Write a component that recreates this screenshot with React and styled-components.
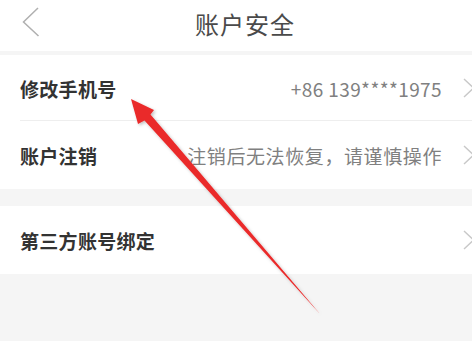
import styled, { createGlobalStyle } from "styled-components";

const GlobalStyle = createGlobalStyle`
  html, body {
    margin: 0;
    padding: 0;
    background: #f5f5f5;
    font-family: "Noto Sans CJK SC", "Noto Sans", sans-serif;
  }
`;

const Page = styled.div`
  position: relative;
  width: 472px;
  height: 341px;
  overflow: hidden;
  background: #f5f5f5;
`;

const Header = styled.header`
  height: 51px;
  background: #fff;
  display: flex;
  align-items: center;
  justify-content: center;
  position: relative;
  margin-bottom: 4px;
  padding-left: 18px;
`;

const BackButton = styled.div`
  position: absolute;
  left: 22px;
  top: 7px;
  width: 18px;
  height: 30px;
  display: flex;
`;

const Title = styled.h1`
  margin: 0;
  font-size: 24px;
  font-weight: 400;
  color: #4a4a4a;
  letter-spacing: 1px;
  line-height: 1;
  margin-top: -4px;
`;

const Group = styled.section`
  background: #fff;
  margin-bottom: ${({ gap }) => gap || 0}px;
`;

const Row = styled.div`
  height: ${({ h }) => h || 67}px;
  display: flex;
  align-items: center;
  padding-left: 20px;
  position: relative;

  ${({ divider }) =>
    divider
      ? `
    &::after {
      content: "";
      position: absolute;
      left: 20px;
      right: 0;
      bottom: 0;
      height: 1px;
      background: #eeeeee;
    }
  `
      : null}
`;

const Label = styled.span`
  font-size: 19px;
  font-weight: 700;
  color: #333;
  flex: 1;
  letter-spacing: 0.3px;
`;

const Value = styled.span`
  font-size: 19px;
  color: #808080;
  margin-right: 21px;
  letter-spacing: ${({ spacing }) => spacing || 0}px;
`;

const Chevron = styled.svg`
  width: 12px;
  height: 20px;
  margin-right: -3px;
  flex-shrink: 0;
`;

const ArrowLayer = styled.svg`
  position: absolute;
  left: 0;
  top: 0;
  pointer-events: none;
`;

const items = [
  { label: "修改手机号", value: "+86 139****1975", h: 66, divider: true, spacing: 0.4 },
  { label: "账户注销", value: "注销后无法恢复，请谨慎操作", h: 68, spacing: 0.6 },
];

const ChevronIcon = () => (
  <Chevron viewBox="0 0 12 20">
    <path d="M1 1 L10.5 10 L1 19" fill="none" stroke="#c8c8c8" strokeWidth="1.4" />
  </Chevron>
);

export default function App() {
  return (
    <Page>
      <GlobalStyle />
      <Header>
        <BackButton>
          <svg width="18" height="30" viewBox="0 0 18 30">
            <path d="M16 1 L1.5 15 L16.5 29" fill="none" stroke="#b0b0b0" strokeWidth="1.5" />
          </svg>
        </BackButton>
        <Title>账户安全</Title>
      </Header>

      <Group gap={17}>
        {items.map((it) => (
          <Row key={it.label} h={it.h} divider={it.divider}>
            <Label>{it.label}</Label>
            <Value spacing={it.spacing}>{it.value}</Value>
            <ChevronIcon />
          </Row>
        ))}
      </Group>

      <Group>
        <Row h={68}>
          <Label>第三方账号绑定</Label>
          <ChevronIcon />
        </Row>
      </Group>

      <ArrowLayer width="472" height="341" viewBox="0 0 472 341">
        <defs>
          <filter id="shadow" x="-20%" y="-20%" width="140%" height="140%">
            <feDropShadow dx="1.5" dy="1.5" stdDeviation="1.5" floodColor="#000" floodOpacity="0.25" />
          </filter>
        </defs>
        <polygon
          points="131,99 154,110 150.5,114.5 320,314 144.5,120.5 138,124"
          fill="#ea2a2a"
          filter="url(#shadow)"
        />
      </ArrowLayer>
    </Page>
  );
}
